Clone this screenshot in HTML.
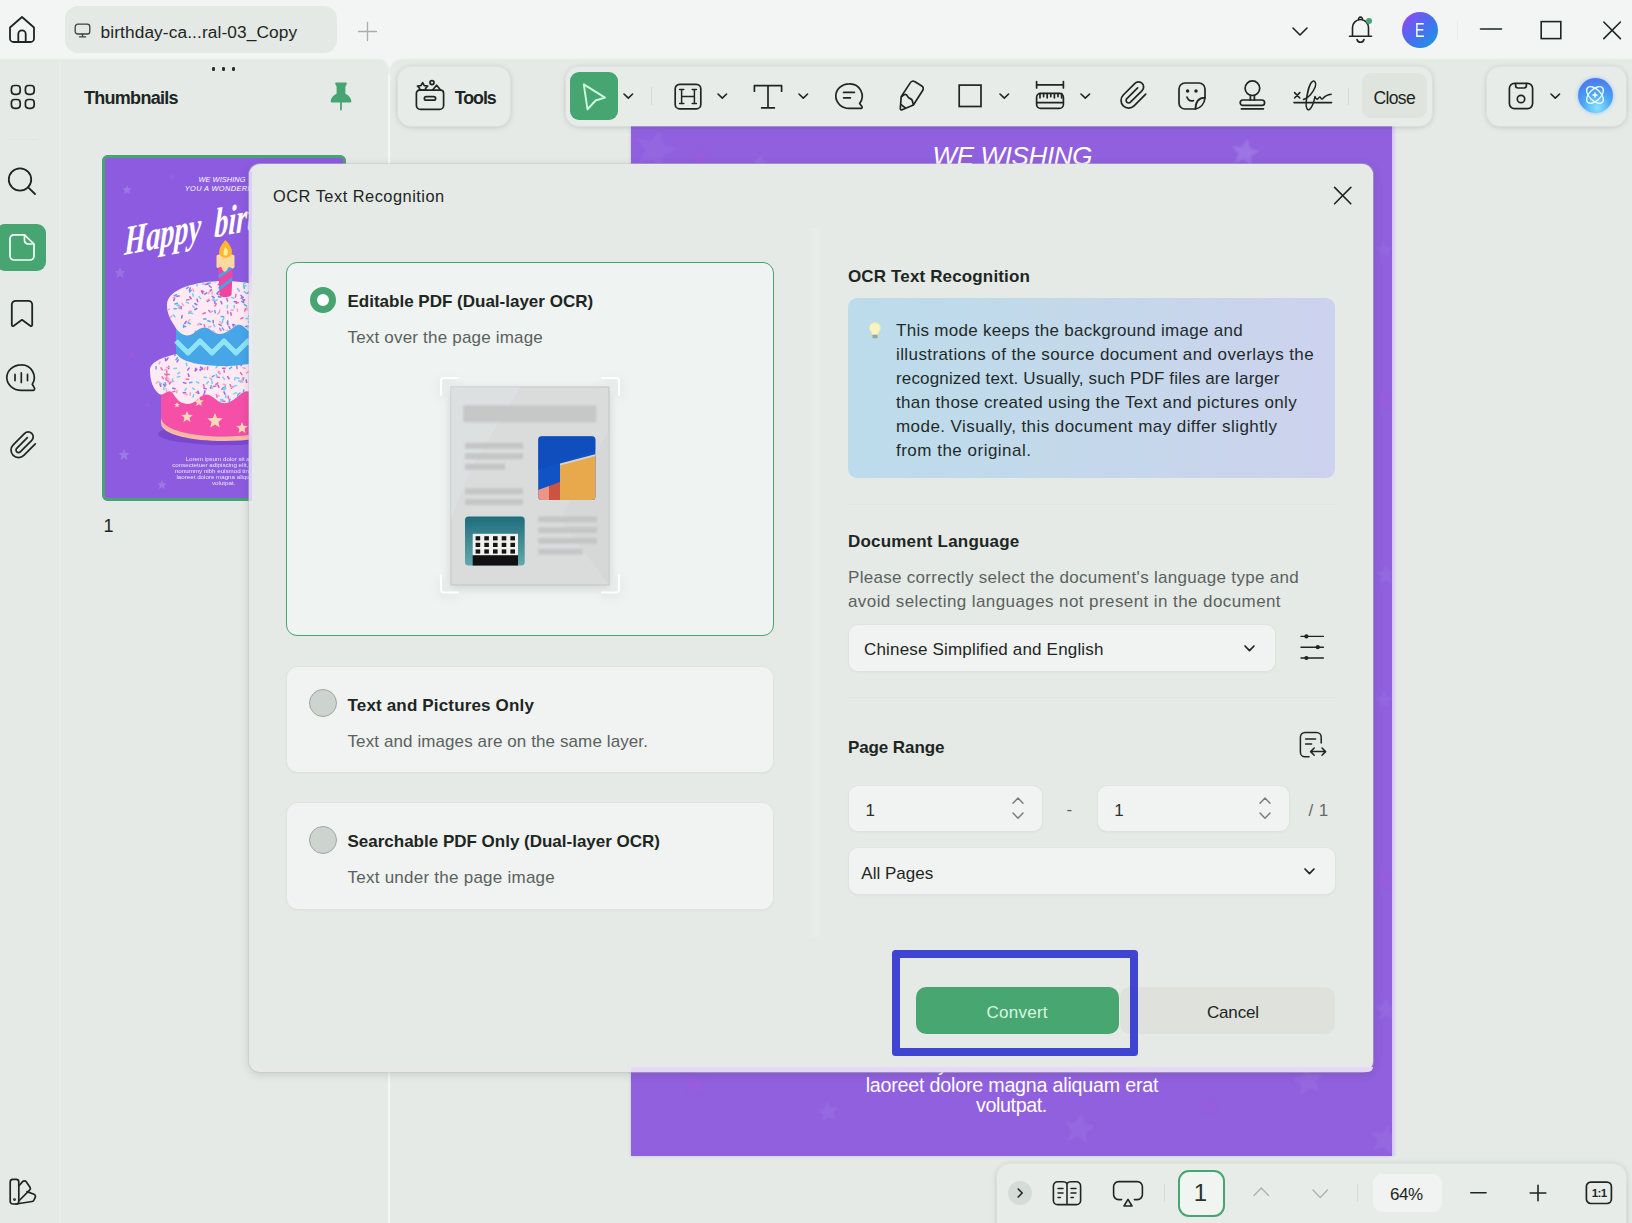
<!DOCTYPE html>
<html lang="en"><head><meta charset="utf-8"><title>OCR Text Recognition</title>
<style>
html,body{margin:0;padding:0;}
body{width:1632px;height:1223px;overflow:hidden;position:relative;background:#e5eae6;font-family:"Liberation Sans",sans-serif;}
.t{position:absolute;white-space:nowrap;line-height:1;}
svg{overflow:visible;}
</style></head><body>
<div style="position:absolute;left:0.0px;top:0.0px;width:1632.0px;height:1223.0px;background:#f2f5f3;"></div>
<div style="position:absolute;left:0.0px;top:59.5px;width:388.0px;height:1163.5px;background:#e5eae6;border-top-right-radius:10px;box-shadow:0 0 1.5px .3px #e5eae6;"></div>
<div style="position:absolute;left:390.5px;top:59.5px;width:1249.5px;height:1163.5px;background:#e5eae6;border-top-left-radius:11px;box-shadow:0 0 1.5px .3px #e5eae6;"></div>
<div style="position:absolute;left:388.2px;top:75.0px;width:2.1px;height:1148.0px;background:#f4f7f5;"></div>
<svg style="position:absolute;left:8.0px;top:15.0px;" width="28" height="29" viewBox="0 0 28 29" fill="none" stroke="#1d2622" stroke-width="1.8" stroke-linecap="round" stroke-linejoin="round"><path d="M2 12.5 L14 2 L26 12.5 V23.5 a3.5 3.5 0 0 1 -3.5 3.5 H5.5 a3.5 3.5 0 0 1 -3.5 -3.5 Z"/><path d="M10.3 27 V19 a3.7 3.7 0 0 1 7.4 0 V27"/></svg>
<div style="position:absolute;left:64.5px;top:6.0px;width:272.5px;height:47.0px;background:#e5e9e6;border-radius:13px;"></div>
<svg style="position:absolute;left:74.3px;top:22.8px;" width="17" height="15" viewBox="0 0 17 15" fill="none" stroke="#39423e" stroke-width="1.3" stroke-linecap="round" stroke-linejoin="round"><rect x="1.2" y="1.2" width="14.6" height="9.8" rx="2.6"/><path d="M8.5 11.2 V13.6 M5.4 13.8 H11.6"/></svg>
<span class="t" style="left:100.5px;top:24.0px;font-size:17.3px;color:#1d2622;letter-spacing:0.110px;">birthday-ca...ral-03_Copy</span>
<svg style="position:absolute;left:357.0px;top:21.0px;" width="21" height="21" viewBox="0 0 21 21" fill="none" stroke="#a9aeab" stroke-width="1.3" stroke-linecap="round" stroke-linejoin="round"><path d="M10.5 1.5 V19.5 M1.5 10.5 H19.5"/></svg>
<svg style="position:absolute;left:1290.0px;top:24.5px" width="20" height="13" viewBox="-10.0 -6.5 20 13" fill="none" stroke="#1d2622" stroke-width="1.6" stroke-linecap="round" stroke-linejoin="round"><path d="M-7.0 -3.5 L0 3.5 L7.0 -3.5"/></svg>
<svg style="position:absolute;left:1347.0px;top:14.0px;" width="27" height="31" viewBox="0 0 27 31" fill="none" stroke="#1d2622" stroke-width="1.6" stroke-linecap="round" stroke-linejoin="round"><path d="M11.7 5.6 a1.9 1.9 0 1 1 3.600 0"/><path d="M5.5 22 V13.5 a8 8 0 0 1 16 0 V22"/><path d="M2.5 22.3 H24.5"/><path d="M10 25.5 a3.6 3.6 0 0 0 7 0"/></svg>
<div style="position:absolute;left:1366.0px;top:18.0px;width:6.4px;height:6.4px;background:#46a570;border-radius:50%;"></div>
<div style="position:absolute;left:1402.0px;top:12.0px;width:36.0px;height:36.0px;border-radius:50%;background:linear-gradient(135deg,#8a4cf3 10%,#4a6cf0 50%,#1f93e3 90%);"></div>
<span class="t" style="left:1414.5px;top:20.0px;font-size:20px;color:#fff;transform:scaleX(0.72);transform-origin:0 50%;">E</span>
<div style="position:absolute;left:1456.5px;top:20.0px;width:1.0px;height:20.0px;background:#e9ece9;"></div>
<svg style="position:absolute;left:1478.0px;top:26.0px;" width="26" height="6" viewBox="0 0 26 6" fill="none" stroke="#1d2622" stroke-width="1.6" stroke-linecap="round" stroke-linejoin="round"><path d="M2.5 3 H23.5"/></svg>
<svg style="position:absolute;left:1539.0px;top:20.0px;stroke-linejoin:miter" width="24" height="20" viewBox="0 0 24 20" fill="none" stroke="#1d2622" stroke-width="1.6" stroke-linecap="round" stroke-linejoin="round"><rect x="2.2" y="1.6" width="19.6" height="17" /></svg>
<svg style="position:absolute;left:1601.0px;top:19.0px;" width="22" height="22" viewBox="0 0 22 22" fill="none" stroke="#1d2622" stroke-width="1.6" stroke-linecap="round" stroke-linejoin="round"><path d="M2.8 3 L19.4 19.6 M19.4 3 L2.8 19.6"/></svg>
<div style="position:absolute;left:59.0px;top:62.0px;width:2.0px;height:1161.0px;background:linear-gradient(90deg,rgba(255,255,255,0),rgba(255,255,255,.35),rgba(255,255,255,0));"></div>
<svg style="position:absolute;left:9.5px;top:83.5px;" width="25" height="25" viewBox="0 0 25 25" fill="none" stroke="#1d2622" stroke-width="1.7" stroke-linecap="round" stroke-linejoin="round"><rect x="1.4" y="1.5" width="8.8" height="8.8" rx="3.2"/><rect x="15.4" y="1.5" width="8.8" height="8.8" rx="3.2"/><rect x="1.4" y="15.5" width="8.8" height="8.8" rx="3.2"/><rect x="15.4" y="15.5" width="8.8" height="8.8" rx="3.2"/></svg>
<div style="position:absolute;left:8.0px;top:138.5px;width:30.0px;height:1.0px;background:#dfe4e0;"></div>
<svg style="position:absolute;left:6.0px;top:166.0px;" width="32" height="32" viewBox="0 0 32 32" fill="none" stroke="#1d2622" stroke-width="1.8" stroke-linecap="round" stroke-linejoin="round"><circle cx="14" cy="13.5" r="11.2"/><path d="M22.2 21.4 L29 28"/></svg>
<div style="position:absolute;left:-4.0px;top:224.0px;width:49.8px;height:46.6px;background:#46a570;border-radius:9px;"></div>
<svg style="position:absolute;left:8.0px;top:232.0px;" width="28" height="31" viewBox="0 0 28 31" fill="none" stroke="#f4fff8" stroke-width="1.7" stroke-linecap="round" stroke-linejoin="round"><path d="M6 2.8 H16.5 L26 12 V24 a4 4 0 0 1 -4 4 H6 a4 4 0 0 1 -4 -4 V6.8 a4 4 0 0 1 4 -4 Z"/><path d="M16.5 3 V8.5 a3.5 3.5 0 0 0 3.5 3.5 H25.8"/></svg>
<svg style="position:absolute;left:10.0px;top:299.0px;" width="24" height="30" viewBox="0 0 24 30" fill="none" stroke="#1d2622" stroke-width="1.8" stroke-linecap="round" stroke-linejoin="round"><path d="M5.8 1.8 H18.2 a4 4 0 0 1 4 4 V26 a1.1 1.1 0 0 1 -1.700 .9 L12 20.8 L3.500 26.900 a1.1 1.1 0 0 1 -1.700 -.9 V5.8 a4 4 0 0 1 4 -4 Z"/></svg>
<svg style="position:absolute;left:5.0px;top:363.0px;" width="33" height="31" viewBox="0 0 33 31" fill="none" stroke="#1d2622" stroke-width="1.7" stroke-linecap="round" stroke-linejoin="round"><path d="M16.2 1.9 a14.4 12.7 0 1 0 0 25.4 H28 a1.6 1.6 0 0 0 1.400 -2.400 L27.300 21.300 A12.700 12.700 0 0 0 16.200 1.900 Z"/><path d="M10 11.4 V17.6 M16.300 9.800 V19.400 M22.500 11.400 V17.600"/></svg>
<svg style="position:absolute;left:8.0px;top:430.0px;" width="30" height="30" viewBox="0 0 30 30" fill="none" stroke="#1d2622" stroke-width="1.7" stroke-linecap="round" stroke-linejoin="round"><g transform="translate(0.5,0.1) scale(1.25)"><path d="M21.44 11.05l-9.19 9.19a6 6 0 0 1-8.49-8.49l9.19-9.19a4 4 0 0 1 5.66 5.66l-9.2 9.19a2 2 0 0 1-2.83-2.83l8.49-8.48" stroke-width="1.36"/></g></svg>
<svg style="position:absolute;left:8.0px;top:1177.0px;" width="30" height="30" viewBox="0 0 30 30" fill="none" stroke="#1d2622" stroke-width="1.7" stroke-linecap="round" stroke-linejoin="round"><rect x="2.2" y="2.4" width="8.6" height="24.6" rx="2.6"/><path d="M10.8 9 L14.6 4.6 a2.4 2.4 0 0 1 3.6 0.2 L22 10.2 a2.4 2.4 0 0 1 -0.4 3 L10.8 24"/><path d="M19 14.6 L26 17.2 a2.4 2.4 0 0 1 1.2 3.2 L26 23 a2.4 2.4 0 0 1 -2 1.5 L8 27"/><circle cx="6.5" cy="22.6" r="0.6"/></svg>
<div style="position:absolute;left:212.2px;top:66.5px;width:2.6px;height:4.8px;background:#27302c;border-radius:1.3px;"></div>
<div style="position:absolute;left:222.2px;top:66.5px;width:2.6px;height:4.8px;background:#27302c;border-radius:1.3px;"></div>
<div style="position:absolute;left:232.2px;top:66.5px;width:2.6px;height:4.8px;background:#27302c;border-radius:1.3px;"></div>
<span class="t" style="left:84.0px;top:89.0px;font-size:18px;color:#1d2622;font-weight:700;letter-spacing:-0.721px;">Thumbnails</span>
<svg style="position:absolute;left:329.0px;top:80.0px;" width="24" height="32" viewBox="0 0 24 32" fill="none" stroke="#1d2622" stroke-width="1.2" stroke-linecap="round" stroke-linejoin="round"><path d="M7 3.2 H17 L16.4 5.4 L15.6 6 V14.2 C18.6 15.6 21.4 18 21.6 21.6 H2.4 C2.6 18 5.4 15.6 8.4 14.2 V6 L7.6 5.4 Z" fill="#46a570" stroke="#46a570" stroke-width="1.6"/><path d="M12 22 V29.6" stroke="#46a570" stroke-width="1.8"/></svg>
<span class="t" style="left:103.5px;top:517.0px;font-size:18px;color:#1d2622;">1</span>
<div style="position:absolute;left:630.5px;top:126.0px;width:761.5px;height:1030.0px;background:#9060de;overflow:hidden;box-shadow:0 0 3px rgba(90,70,140,.25);"><svg width="762" height="1030" style="position:absolute;left:0;top:0;filter:blur(1px)"><polygon points="616.6,12.2 618.9,22.3 628.9,24.9 620.0,30.2 620.6,40.5 612.8,33.6 603.2,37.4 607.3,27.9 600.8,20.0 611.0,20.9" fill="#9c74e3"/><polygon points="29.7,2.7 31.7,17.8 46.0,22.8 32.3,29.4 31.9,44.5 21.4,33.6 6.9,37.8 14.1,24.5 5.5,12.0 20.5,14.8" fill="#9466df"/><polygon points="69.0,20.0 72.2,27.6 80.4,28.3 74.1,33.7 76.1,41.7 69.0,37.4 61.9,41.7 63.9,33.7 57.6,28.3 65.8,27.6" fill="#975ddd"/><polygon points="129.8,28.0 131.7,33.9 137.8,35.0 132.7,38.6 133.6,44.7 128.6,41.0 123.1,43.8 125.1,37.9 120.7,33.5 126.9,33.5" fill="#966adf"/><polygon points="195.5,975.1 199.3,981.6 206.9,981.2 201.9,986.9 204.6,993.9 197.7,990.9 191.8,995.7 192.6,988.2 186.2,984.1 193.6,982.4" fill="#966adf"/><polygon points="450.4,986.2 453.3,997.5 464.7,1000.0 454.9,1006.4 456.0,1018.0 446.9,1010.6 436.2,1015.2 440.5,1004.3 432.7,995.5 444.4,996.2" fill="#9568df"/><polygon points="674.0,938.3 680.4,948.1 692.0,947.0 684.6,956.1 689.2,966.8 678.3,962.5 669.5,970.3 670.2,958.6 660.2,952.6 671.5,949.7" fill="#9568df"/><polygon points="63.0,946.0 66.4,954.3 75.4,955.0 68.6,960.8 70.6,969.5 63.0,964.9 55.4,969.5 57.4,960.8 50.6,955.0 59.6,954.3" fill="#975ddd"/><polygon points="579.0,969.0 581.9,976.0 589.5,976.6 583.7,981.5 585.5,988.9 579.0,985.0 572.5,988.9 574.3,981.5 568.5,976.6 576.1,976.0" fill="#975ddd"/><polygon points="757.3,998.3 759.4,1009.2 769.9,1012.3 760.2,1017.6 760.5,1028.6 752.5,1021.0 742.1,1024.7 746.8,1014.8 740.1,1006.0 751.1,1007.4" fill="#9568df"/><polygon points="752.0,262.0 755.2,269.6 763.4,270.3 757.1,275.7 759.1,283.7 752.0,279.4 744.9,283.7 746.9,275.7 740.6,270.3 748.8,269.6" fill="#975ddd"/><polygon points="755.0,438.0 757.9,445.0 765.5,445.6 759.7,450.5 761.5,457.9 755.0,453.9 748.5,457.9 750.3,450.5 744.5,445.6 752.1,445.0" fill="#9568df"/><polygon points="751.0,742.0 754.2,749.6 762.4,750.3 756.1,755.7 758.1,763.7 751.0,759.4 743.9,763.7 745.9,755.7 739.6,750.3 747.8,749.6" fill="#975ddd"/><polygon points="753.0,564.0 755.6,570.4 762.5,570.9 757.3,575.4 758.9,582.1 753.0,578.5 747.1,582.1 748.7,575.4 743.5,570.9 750.4,570.4" fill="#9466df"/><polygon points="753.0,114.0 755.6,120.4 762.5,120.9 757.3,125.4 758.9,132.1 753.0,128.5 747.1,132.1 748.7,125.4 743.5,120.9 750.4,120.4" fill="#9466df"/><polygon points="755.0,872.0 758.2,879.6 766.4,880.3 760.1,885.7 762.1,893.7 755.0,889.4 747.9,893.7 749.9,885.7 743.6,880.3 751.8,879.6" fill="#9568df"/></svg></div>
<div style="position:absolute;left:1392.0px;top:126.0px;width:5.0px;height:1030.0px;background:linear-gradient(90deg,#d6c6f4,rgba(224,214,244,0));"></div>
<span class="t" style="left:932.5px;top:143.0px;font-size:26px;color:#fff;font-style:italic;letter-spacing:-0.371px;">WE WISHING</span>
<span class="t" style="left:865.7px;top:1076.0px;font-size:19.7px;color:#fff;letter-spacing:-0.223px;">laoreet dolore magna aliquam erat</span>
<span class="t" style="left:976.0px;top:1096.0px;font-size:19.7px;color:#fff;letter-spacing:-0.386px;">volutpat.</span>
<div style="position:absolute;left:631px;top:1071.2px;width:761px;height:10px;overflow:hidden;">
<span class="t" style="left:233.0px;top:-16.0px;font-size:19.7px;color:#fff;letter-spacing:-0.421px;">nonummy nibh euismod tincidunt ut</span>
</div>
<div style="position:absolute;left:101.5px;top:155.3px;width:244.500px;height:345.300px;background:#8c5be0;border-radius:6px;overflow:hidden;box-shadow:0 0 0 0 #000;"><svg width="245" height="346" style="position:absolute;left:0;top:0"><polygon points="60.0,73.0 61.9,77.5 66.7,77.8 63.0,81.0 64.1,85.7 60.0,83.2 55.9,85.7 57.0,81.0 53.3,77.8 58.1,77.5" fill="#9d78e4"/><polygon points="25.0,30.0 26.3,33.2 29.8,33.5 27.1,35.7 27.9,39.0 25.0,37.2 22.1,39.0 22.9,35.7 20.2,33.5 23.7,33.2" fill="#9d78e4"/><polygon points="18.0,112.0 19.6,115.8 23.7,116.1 20.6,118.8 21.5,122.9 18.0,120.7 14.5,122.9 15.4,118.8 12.3,116.1 16.4,115.8" fill="#9872e2"/><polygon points="70.0,18.0 71.1,20.5 73.8,20.8 71.7,22.6 72.4,25.2 70.0,23.8 67.6,25.2 68.3,22.6 66.2,20.8 68.9,20.5" fill="#975ddd"/><polygon points="30.0,195.0 31.3,198.2 34.8,198.5 32.1,200.7 32.9,204.0 30.0,202.2 27.1,204.0 27.9,200.7 25.2,198.5 28.7,198.2" fill="#975ddd"/><polygon points="22.0,294.0 23.6,297.8 27.7,298.1 24.6,300.8 25.5,304.9 22.0,302.7 18.5,304.9 19.4,300.8 16.3,298.1 20.4,297.8" fill="#9d78e4"/><polygon points="45.0,246.0 46.1,248.5 48.8,248.8 46.7,250.6 47.4,253.2 45.0,251.8 42.6,253.2 43.3,250.6 41.2,248.8 43.9,248.5" fill="#975ddd"/><polygon points="60.0,325.0 61.3,328.2 64.8,328.5 62.1,330.7 62.9,334.0 60.0,332.2 57.1,334.0 57.9,330.7 55.2,328.5 58.7,328.2" fill="#9d78e4"/><ellipse cx="124" cy="279" rx="68" ry="11" fill="#7a48cf"/><path d="M59 236 V262 C59 288 185 288 185 262 V236 Z" fill="#f54fa8"/><path d="M59 262 C59 288 185 288 185 262 V268 C185 292 59 292 59 268 Z" fill="#ffb6a3"/><polygon points="85.0,256.0 86.6,259.8 90.7,260.1 87.6,262.8 88.5,266.9 85.0,264.7 81.5,266.9 82.4,262.8 79.3,260.1 83.4,259.8" fill="#ffd9b8"/><polygon points="113.0,258.0 115.1,263.1 120.6,263.5 116.4,267.1 117.7,272.5 113.0,269.6 108.3,272.5 109.6,267.1 105.4,263.5 110.9,263.1" fill="#ffd9b8"/><polygon points="140.0,267.0 141.6,270.8 145.7,271.1 142.6,273.8 143.5,277.9 140.0,275.7 136.5,277.9 137.4,273.8 134.3,271.1 138.4,270.8" fill="#ffd9b8"/><polygon points="97.0,242.0 98.3,245.2 101.8,245.5 99.1,247.7 99.9,251.0 97.0,249.2 94.1,251.0 94.9,247.7 92.2,245.5 95.7,245.2" fill="#ffd9b8"/><polygon points="75.0,247.0 75.8,248.9 77.9,249.1 76.3,250.4 76.8,252.4 75.0,251.3 73.2,252.4 73.7,250.4 72.1,249.1 74.2,248.9" fill="#ffd9b8"/><path d="M48 215 C48 188 196 188 196 215 C197 232 190 246 182 240 C176 236 172 252 162 248 C152 244 150 232 140 238 C132 244 126 252 116 246 C108 240 104 236 96 244 C88 252 78 250 72 240 C66 230 62 244 56 238 C50 232 48 224 48 215 Z" fill="#fdeaf3"/><clipPath id="f2"><path d="M48 215 C48 188 196 188 196 215 C197 232 190 246 182 240 C176 236 172 252 162 248 C152 244 150 232 140 238 C132 244 126 252 116 246 C108 240 104 236 96 244 C88 252 78 250 72 240 C66 230 62 244 56 238 C50 232 48 224 48 215 Z"/></clipPath><g clip-path="url(#f2)"><path d="M115.9 227.9l-2.0 1.4M89.6 200.2l-2.1 1.2M150.4 224.0l1.7 1.7M64.8 215.9l0.0 2.4M86.6 224.2l-2.4 0.0M174.0 223.8l2.3 0.8M148.7 204.5l-2.4 0.3M169.1 196.5l-0.7 2.3M64.7 222.0l-0.9 2.2M108.0 247.5l1.9 1.4M163.0 227.3l1.7 1.7M99.4 191.9l2.4 0.2M60.2 221.8l1.3 2.0M176.3 202.5l0.6 2.3M115.0 222.0l2.3 0.5M128.0 229.6l1.1 2.1M134.9 193.6l-2.4 0.1M72.9 236.2l-2.3 0.7M64.4 224.8l1.9 1.4M59.0 212.8l1.3 2.0M170.8 212.8l-2.4 0.4M114.4 239.8l0.7 2.3M64.8 219.4l2.4 0.2M140.4 241.9l-1.9 1.4M162.3 207.6l2.0 1.3M142.0 246.3l-2.4 0.1M99.5 213.7l-1.3 2.0M101.4 229.8l0.9 2.2M104.2 195.0l-2.4 0.2M134.7 211.0l0.4 2.4M120.5 245.9l2.4 0.3M62.8 219.0l2.0 1.4M116.3 217.0l1.6 1.7M105.7 212.1l-0.3 2.4M94.2 237.4l2.2 1.0M142.6 200.6l-2.0 1.3M152.1 225.3l-1.2 2.1M171.9 227.9l-1.9 1.5M98.4 200.2l-0.3 2.4M177.7 212.5l-0.2 2.4M138.5 217.6l1.4 2.0M113.8 230.9l-2.3 0.6M122.1 214.9l0.1 2.4M186.4 215.2l-1.8 1.6M151.7 194.5l-2.0 1.3M157.2 226.4l0.2 2.4M95.0 196.1l-1.9 1.5M126.1 241.3l0.3 2.4M182.2 211.4l-0.4 2.4" stroke="#f067b4" stroke-width="1.5" stroke-linecap="round" fill="none"/><path d="M129.6 202.0l-0.7 2.3M165.9 217.4l2.3 0.5M169.1 221.5l-2.3 0.6M145.4 239.0l0.4 2.4M141.7 222.8l-0.6 2.3M166.0 220.7l-0.9 2.2M148.4 242.5l2.3 0.5M141.8 235.1l-0.5 2.3M89.3 198.0l-0.6 2.3M170.2 229.2l-1.6 1.8M176.8 223.1l0.1 2.4M138.0 238.0l-2.0 1.4M104.3 190.7l1.5 1.8M112.2 220.7l-2.1 1.2M54.1 211.6l-0.0 2.4M89.9 227.2l-2.3 0.6M129.6 212.2l-1.9 1.4M164.5 239.2l2.4 0.2M158.0 234.1l1.7 1.7M154.5 209.3l1.3 2.0M137.4 249.0l-2.3 0.8M175.6 234.5l0.6 2.3M135.5 205.3l-2.3 0.7M167.7 228.8l0.0 2.4M148.0 213.7l0.2 2.4M184.7 223.3l-0.6 2.3M178.4 209.0l0.2 2.4M170.8 237.7l1.0 2.2M75.4 202.8l-1.4 1.9M79.1 200.0l2.0 1.3M123.4 190.8l2.1 1.2M92.0 205.4l0.2 2.4M138.5 200.4l-2.0 1.3M63.1 227.8l0.8 2.3M107.1 244.7l-2.0 1.2M133.6 206.7l2.4 0.4M136.8 200.4l0.6 2.3M123.3 231.0l-1.0 2.2M127.9 244.2l-0.7 2.3M165.1 241.9l-2.0 1.4M172.4 226.8l2.0 1.3M135.8 240.2l-0.2 2.4" stroke="#5aa9ee" stroke-width="1.5" stroke-linecap="round" fill="none"/><path d="M110.5 203.0l1.8 1.6M127.5 204.3l2.3 0.6M155.8 232.3l1.9 1.5M178.9 236.8l1.9 1.5M156.9 215.6l-1.4 1.9M144.2 224.9l0.4 2.4M63.4 203.4l0.2 2.4M77.2 196.6l-2.2 0.9M86.3 219.0l0.7 2.3M154.9 206.1l-0.6 2.3M180.8 225.3l-0.5 2.3M68.6 226.8l-1.1 2.1M114.4 206.7l1.6 1.8M66.7 211.3l-0.0 2.4M138.8 247.6l-2.4 0.2M109.5 230.9l-0.9 2.2M125.6 221.8l1.5 1.9M100.4 213.9l-2.3 0.6M141.2 243.3l-2.3 0.7M138.9 208.2l0.3 2.4M93.8 213.3l-0.6 2.3M131.3 231.7l-1.9 1.4M159.0 224.7l-2.4 0.3M157.7 220.1l1.6 1.8M101.9 239.0l0.1 2.4M87.2 213.1l-1.5 1.9M70.8 233.3l2.4 0.4M123.0 213.2l-2.4 0.1M76.3 204.8l-1.3 2.0M132.4 198.5l-2.4 0.0M117.4 205.0l2.2 0.8M133.7 195.7l1.0 2.2M83.6 237.7l-2.4 0.1M81.5 227.6l2.3 0.7M105.8 199.3l-1.8 1.6M115.9 230.0l1.0 2.2M66.0 203.0l-1.3 2.0M61.6 229.2l1.4 2.0M122.0 236.9l1.0 2.2M94.9 214.3l-1.7 1.7M101.8 233.1l2.3 0.8M95.8 236.2l1.1 2.1M103.8 191.1l0.7 2.3M102.8 235.7l-0.2 2.4M58.0 229.0l0.7 2.3M73.3 198.0l-0.4 2.4M98.5 212.1l2.1 1.1M156.1 239.2l-2.4 0.5M121.5 232.5l-1.6 1.8" stroke="#9b6be0" stroke-width="1.5" stroke-linecap="round" fill="none"/><path d="M71.7 226.3l-2.3 0.6M65.2 222.9l2.0 1.3M136.6 247.9l2.4 0.4M121.3 229.3l2.4 0.4M184.6 216.4l0.6 2.3M179.2 220.8l-2.1 1.2M170.7 213.5l-0.6 2.3M139.9 191.3l1.1 2.1M158.1 201.7l-0.9 2.2M75.1 235.4l-0.6 2.3M146.3 216.6l-1.8 1.5M131.9 231.5l-2.3 0.7M160.7 233.1l-2.3 0.6M90.5 200.7l-1.0 2.2M178.6 212.9l1.9 1.4M64.0 234.0l0.8 2.3M68.6 226.5l-2.3 0.7M64.8 214.6l-2.3 0.6M153.5 236.4l-1.5 1.8M56.2 226.6l-1.9 1.4M114.9 240.0l2.2 0.9M100.5 193.1l2.4 0.2M140.9 212.7l2.3 0.7M188.7 219.1l-2.0 1.4M131.6 203.2l2.3 0.6M101.4 194.5l-1.8 1.6M138.9 225.7l1.8 1.6M107.8 223.2l2.0 1.4M67.1 212.3l-2.4 0.3M155.0 201.5l-0.7 2.3M183.1 231.6l0.5 2.3M103.0 212.7l-0.9 2.2M156.6 233.0l-1.2 2.1M140.5 222.9l-0.5 2.4M58.0 206.8l-1.1 2.1M170.3 231.6l2.2 1.0M162.2 198.0l-2.1 1.2M126.1 210.5l-2.2 1.0M189.7 228.3l-1.9 1.4M101.5 207.7l2.4 0.1M161.1 207.9l1.7 1.7M88.4 237.7l-0.2 2.4M147.7 206.3l-1.9 1.5M143.8 242.4l-1.9 1.5M188.1 209.3l1.3 2.0M82.9 238.8l2.3 0.8M117.0 216.1l0.9 2.2" stroke="#f8a2c8" stroke-width="1.5" stroke-linecap="round" fill="none"/><path d="M57.5 227.6l2.0 1.3M84.4 208.2l0.4 2.4M134.1 237.7l-2.2 1.1M134.7 230.4l-2.3 0.7M122.9 232.2l-1.6 1.8M146.2 247.2l-2.2 0.9M134.7 222.7l2.3 0.8M61.8 232.4l0.1 2.4M70.6 223.9l-0.1 2.4M121.0 222.2l1.4 1.9M84.2 233.5l-1.2 2.1M102.0 222.3l2.4 0.2M120.6 244.5l-1.7 1.7M109.8 225.9l0.4 2.4M124.6 199.0l-0.4 2.4M89.6 202.8l-2.1 1.1M120.8 244.4l-2.4 0.3M140.4 246.6l-2.4 0.2M77.6 217.4l-1.9 1.4M136.8 225.8l2.1 1.2M179.7 202.8l-2.3 0.6M123.8 240.0l0.0 2.4M147.8 197.8l-0.3 2.4M89.3 202.8l-2.1 1.1M161.2 233.3l-1.7 1.7M133.1 222.4l-0.4 2.4M125.7 201.7l0.3 2.4M94.6 226.8l2.1 1.2M141.2 202.1l-2.3 0.8M114.2 219.5l1.1 2.2M91.6 239.6l-0.5 2.3M74.4 213.3l-2.4 0.3M166.1 212.2l-0.2 2.4M106.3 226.7l-1.5 1.9M135.5 248.1l-1.6 1.8M98.6 198.7l-1.9 1.4M90.5 233.2l2.1 1.1M123.9 233.3l-1.8 1.6M109.2 231.2l1.0 2.2M77.7 221.7l-2.4 0.3M74.4 196.4l1.6 1.8M115.7 211.0l-1.7 1.7M163.7 197.4l-1.5 1.9" stroke="#6fd0f0" stroke-width="1.5" stroke-linecap="round" fill="none"/></g><path d="M74 170 V196 C74 216 170 216 170 196 V170 Z" fill="#46a6e8"/><path d="M74 186 L86 198 L98 186 L110 198 L122 186 L134 198 L146 186 L158 198 L170 186" fill="none" stroke="#8ee3f5" stroke-width="5" stroke-linejoin="round"/><path d="M65 150 C65 118 179 118 179 150 C180 164 176 176 168 172 C162 168 160 182 150 178 C142 174 140 166 132 172 C124 178 118 182 110 176 C104 170 98 172 92 178 C84 184 76 178 72 170 C68 164 65 158 65 150 Z" fill="#fdeaf3"/><clipPath id="f1"><path d="M65 150 C65 118 179 118 179 150 C180 164 176 176 168 172 C162 168 160 182 150 178 C142 174 140 166 132 172 C124 178 118 182 110 176 C104 170 98 172 92 178 C84 184 76 178 72 170 C68 164 65 158 65 150 Z"/></clipPath><g clip-path="url(#f1)"><path d="M125.6 156.2l0.3 2.4M114.2 148.9l-1.2 2.1M133.9 139.5l-0.4 2.4M117.8 173.5l1.2 2.1M102.2 169.8l0.6 2.3M99.4 135.8l2.2 0.9M141.3 142.2l-2.2 1.0M134.2 174.1l2.0 1.4M103.2 157.8l-2.2 1.0M136.3 147.6l-2.3 0.7M112.1 124.5l2.4 0.2M121.8 130.3l-2.4 0.1M87.1 144.6l-2.4 0.5M93.6 176.3l-0.8 2.3M141.0 162.6l-2.1 1.2M153.1 153.1l0.9 2.2M143.4 153.8l-0.7 2.3M167.3 156.1l1.9 1.5M164.9 138.8l-2.2 0.9M111.2 178.2l0.4 2.4" stroke="#f067b4" stroke-width="1.5" stroke-linecap="round" fill="none"/><path d="M161.0 164.9l-1.5 1.9M139.8 146.3l1.9 1.4M105.8 165.7l2.3 0.8M120.3 173.0l1.4 1.9M97.1 168.5l2.2 1.0M162.8 149.3l-1.5 1.9M150.7 137.6l-1.6 1.8M88.8 156.6l-1.9 1.5M89.3 135.3l-1.8 1.6M147.7 163.9l1.2 2.1M147.3 136.8l-2.0 1.4M114.9 138.5l2.0 1.3M139.9 143.4l1.8 1.6M148.4 159.5l-1.7 1.7M141.4 175.1l2.4 0.2M81.6 170.0l0.0 2.4M157.4 138.4l-0.3 2.4M108.3 128.0l-2.4 0.3M74.4 153.7l-2.4 0.1M125.7 165.8l-0.4 2.4M74.4 139.8l-2.2 0.9M112.7 155.4l0.6 2.3M137.8 171.7l2.1 1.2M101.7 163.9l2.4 0.1M120.1 129.4l-0.5 2.3M131.2 169.4l0.2 2.4M136.1 176.0l1.1 2.1M75.3 148.3l-2.3 0.7M153.9 136.9l1.6 1.8M81.4 171.2l2.4 0.3M142.5 149.6l2.0 1.4M119.2 161.6l2.4 0.1M107.6 128.5l-2.4 0.3M76.5 151.2l1.0 2.2M141.7 130.9l0.6 2.3M86.4 132.2l-1.9 1.4M134.7 173.6l1.5 1.9M160.6 147.6l-1.4 2.0M86.0 167.7l2.2 1.0M129.5 176.0l0.7 2.3" stroke="#5aa9ee" stroke-width="1.5" stroke-linecap="round" fill="none"/><path d="M111.1 165.4l0.2 2.4M88.2 133.0l-0.8 2.3M92.9 148.5l2.0 1.3M147.1 166.5l0.6 2.3M142.6 144.9l-1.7 1.7M107.3 145.1l-2.0 1.3M109.5 134.6l-1.7 1.7M157.6 139.1l0.7 2.3M118.0 128.1l-1.7 1.7M107.3 130.7l1.8 1.6M93.1 127.3l-2.2 0.9M87.8 141.8l1.4 1.9M125.6 167.3l0.3 2.4M104.8 137.9l-2.0 1.3M153.3 135.9l1.8 1.6M168.6 162.0l-2.3 0.7M80.1 160.5l-0.4 2.4M72.6 143.3l-0.8 2.3M112.4 146.0l0.6 2.3M124.8 143.6l0.7 2.3M106.8 155.5l1.8 1.6M146.1 171.4l-2.4 0.0M130.6 169.5l2.3 0.5M117.0 169.3l2.1 1.1M110.2 141.3l1.9 1.4M139.0 140.4l1.5 1.9M77.1 141.0l-2.4 0.2M106.1 129.1l-2.4 0.3M150.7 165.2l0.1 2.4M94.9 153.5l-2.1 1.1M119.0 146.5l0.8 2.3M79.0 151.4l0.2 2.4M132.2 146.6l2.4 0.3M99.7 136.4l1.1 2.1M167.8 164.5l-2.2 0.9M155.7 131.0l2.4 0.4M84.2 166.5l-1.4 2.0M116.8 136.4l-1.5 1.9M116.4 141.8l2.4 0.3M128.7 157.7l0.5 2.4M95.0 144.3l0.7 2.3M127.0 171.5l1.0 2.2" stroke="#9b6be0" stroke-width="1.5" stroke-linecap="round" fill="none"/><path d="M131.3 155.1l-2.4 0.1M110.6 156.2l-2.3 0.6M136.4 134.2l1.2 2.1M95.7 176.3l1.0 2.2M106.6 174.1l-1.6 1.8M132.9 171.0l2.2 1.0M112.8 124.7l0.7 2.3M67.4 154.1l-2.1 1.2M117.2 157.4l-1.6 1.8M159.9 132.3l1.7 1.7M125.7 179.9l-2.4 0.2M144.7 152.7l0.4 2.4M109.1 171.5l-2.3 0.5M138.7 176.8l1.1 2.2M153.2 133.0l2.2 1.0M112.5 145.0l-2.4 0.1M132.5 125.2l1.8 1.6M161.0 153.2l0.5 2.3M76.9 151.1l-0.1 2.4M124.0 179.7l2.2 1.0M88.9 155.8l-2.1 1.1M87.9 164.7l-1.7 1.6M69.9 160.7l-1.3 2.0M107.4 136.5l-0.8 2.3M80.1 148.6l1.3 2.0M107.0 144.2l-2.1 1.1M125.2 175.4l2.3 0.7M111.0 175.8l1.8 1.5M166.3 135.7l1.6 1.8M90.9 133.9l0.7 2.3M135.3 153.9l0.3 2.4M110.1 136.5l0.0 2.4M143.1 125.3l1.3 2.0M117.9 166.7l1.7 1.7M97.5 168.6l-1.9 1.4M117.8 155.1l-0.3 2.4M73.4 141.7l-2.2 0.9" stroke="#f8a2c8" stroke-width="1.5" stroke-linecap="round" fill="none"/><path d="M88.1 157.7l2.3 0.8M172.0 147.9l-1.2 2.1M110.9 143.0l0.9 2.2M156.2 138.3l-0.5 2.4M90.6 138.8l0.7 2.3M129.6 142.4l2.2 0.8M161.5 167.0l2.2 0.9M135.6 133.6l1.0 2.2M167.1 153.4l-1.4 2.0M90.8 150.9l1.6 1.8M97.0 141.8l1.7 1.7M132.1 150.4l0.3 2.4M95.1 128.5l-0.1 2.4M144.0 130.8l-2.4 0.1M143.7 174.9l2.1 1.2M164.9 156.2l-1.5 1.9M71.6 160.0l1.3 2.0M143.3 127.9l-1.9 1.5M122.0 163.0l-1.4 2.0M103.0 128.9l-2.4 0.2M142.3 136.5l1.7 1.7M84.3 147.1l2.2 1.0M115.3 144.9l-2.1 1.1M120.7 164.9l-0.2 2.4M125.5 150.6l-0.4 2.4M145.7 170.7l0.1 2.4M111.7 169.5l1.0 2.2M74.8 149.9l2.4 0.3M142.0 176.7l1.9 1.4M157.4 148.8l-1.4 2.0M144.0 163.6l2.4 0.1" stroke="#6fd0f0" stroke-width="1.5" stroke-linecap="round" fill="none"/></g><path d="M116 108 H131 L129.500 140 C126 143 120 143 117.500 140 Z" fill="#f0459c"/><path d="M116.500 122 L130.500 112 M117 134 L130 124" stroke="#4aa0ea" stroke-width="3.2"/><path d="M114.500 101 C114.500 98 132.500 98 132.500 101 V112 C130 116 128 110 126 113 C124 118 121 118 120 113 C118 110 116 115 114.500 112 Z" fill="#ffd9a0"/><path d="M123.500 85 C129 91 131 95 129.500 99 C127 104 120 104 117.500 99 C116 95 119 90 123.500 85 Z" fill="#ffb52e"/><path d="M123.500 92 C126 95 126.500 97 125.500 99 C124.500 101 122 101 121.500 99 C121 97 122 95 123.500 92 Z" fill="#fff0a0"/></svg>
<span class="t" style="left:97.0px;top:21.0px;font-size:7.4px;color:#fff;font-style:italic;letter-spacing:0.055px;">WE WISHING</span>
<span class="t" style="left:83.2px;top:30.0px;font-size:7.4px;color:#fff;font-style:italic;letter-spacing:0.385px;">YOU A WONDERFUL</span>
<span class="t" style="left:22.0px;top:65.5px;font-size:41px;font-weight:700;font-style:italic;color:#fff;transform:rotate(-11deg) skewX(-13deg) scaleX(.70);transform-origin:0 34.3px;word-spacing:9px;font-family:'Liberation Serif','DejaVu Serif',serif;">Happy birthday</span>
<span class="t" style="left:84.0px;top:301.0px;font-size:6.2px;color:#fff;opacity:.85;">Lorem ipsum dolor sit amet,</span>
<span class="t" style="left:70.7px;top:307.0px;font-size:6.2px;color:#fff;opacity:.85;">consectetuer adipiscing elit, sed diam</span>
<span class="t" style="left:73.4px;top:313.0px;font-size:6.2px;color:#fff;opacity:.85;">nonummy nibh euismod tincidunt ut</span>
<span class="t" style="left:75.0px;top:319.0px;font-size:6.2px;color:#fff;opacity:.85;">laoreet dolore magna aliquam erat</span>
<span class="t" style="left:110.5px;top:325.0px;font-size:6.2px;color:#fff;opacity:.85;">volutpat.</span>
<div style="position:absolute;left:0;top:0;right:0;bottom:0;border:3px solid #46a570;border-radius:6px;"></div></div>
<div style="position:absolute;left:398.0px;top:66.5px;width:112.0px;height:59.0px;background:#e8ece9;border-radius:13px;box-shadow:0 0 0 1px rgba(255,255,255,.3),0 1px 6px rgba(60,80,70,.20),0 0 3px rgba(60,80,70,.14);"></div>
<svg style="position:absolute;left:414.0px;top:78.0px;" width="32" height="33" viewBox="0 0 32 33" fill="none" stroke="#1d2622" stroke-width="1.7" stroke-linecap="round" stroke-linejoin="round"><path d="M2.4 15.2 a3 3 0 0 1 3 -3 H26.6 a3 3 0 0 1 3 3 V27.4 a4 4 0 0 1 -4 4 H6.4 a4 4 0 0 1 -4 -4 Z"/><rect x="10.4" y="18.6" width="11.2" height="3.6" rx="1.8"/><path d="M8.6 4.600 L10.300 7.600 L13.800 8 L11.500 10.400 L12 12.200 H5.200 L5.700 10.400 L3.400 8 L6.900 7.600 Z"/><circle cx="18" cy="4.600" r="2"/><path d="M18.400 12.200 L22.600 7.200 L26.800 12.200"/></svg>
<span class="t" style="left:454.7px;top:90.0px;font-size:17.8px;color:#1d2622;font-weight:700;letter-spacing:-1.009px;">Tools</span>
<div style="position:absolute;left:565.5px;top:66.5px;width:866.5px;height:59.0px;background:#e8ece9;border-radius:13px;box-shadow:0 0 0 1px rgba(255,255,255,.3),0 1px 6px rgba(60,80,70,.20),0 0 3px rgba(60,80,70,.14);"></div>
<div style="position:absolute;left:570.0px;top:72.0px;width:47.6px;height:47.7px;background:#46a570;border-radius:9px;"></div>
<svg style="position:absolute;left:580.0px;top:81.0px;" width="30" height="32" viewBox="0 0 30 32" fill="none" stroke="#cfffe2" stroke-width="1.9" stroke-linecap="round" stroke-linejoin="round"><path d="M3.8 3.4 L25 16.6 L15.6 19.5 L7.5 28.4 Z"/></svg>
<svg style="position:absolute;left:621.3px;top:90.6px" width="14.6" height="10.2" viewBox="-7.3 -5.1 14.6 10.2" fill="none" stroke="#1d2622" stroke-width="1.6" stroke-linecap="round" stroke-linejoin="round"><path d="M-4.3 -2.1 L0 2.1 L4.3 -2.1"/></svg>
<div style="position:absolute;left:650.5px;top:87.0px;width:1.0px;height:17.5px;background:#d6dad7;"></div>
<svg style="position:absolute;left:673.0px;top:81.5px;" width="30" height="29" viewBox="0 0 30 29" fill="none" stroke="#1d2622" stroke-width="1.7" stroke-linecap="round" stroke-linejoin="round"><rect x="2.2" y="2.3" width="25.6" height="24.5" rx="4.4"/><path d="M8.6 7.6 V21.4 M21.4 7.6 V21.4 M8.6 14.4 H21.4 M6.6 7.4 H10.8 M19.2 7.4 H23.4 M6.6 21.6 H10.8 M19.2 21.6 H23.4" stroke-width="1.5"/></svg>
<svg style="position:absolute;left:715.3px;top:90.6px" width="14.6" height="10.2" viewBox="-7.3 -5.1 14.6 10.2" fill="none" stroke="#1d2622" stroke-width="1.6" stroke-linecap="round" stroke-linejoin="round"><path d="M-4.3 -2.1 L0 2.1 L4.3 -2.1"/></svg>
<svg style="position:absolute;left:752.0px;top:82.5px;" width="32" height="27" viewBox="0 0 32 27" fill="none" stroke="#1d2622" stroke-width="1.7" stroke-linecap="round" stroke-linejoin="round"><path d="M2.4 8.2 V2.6 H29.6 V8.2 M16 2.6 V24.6 M9.6 24.8 H22.4"/></svg>
<svg style="position:absolute;left:796.2px;top:90.6px" width="14.6" height="10.2" viewBox="-7.3 -5.1 14.6 10.2" fill="none" stroke="#1d2622" stroke-width="1.6" stroke-linecap="round" stroke-linejoin="round"><path d="M-4.3 -2.1 L0 2.1 L4.3 -2.1"/></svg>
<svg style="position:absolute;left:833.0px;top:81.0px;" width="33" height="31" viewBox="0 0 33 31" fill="none" stroke="#1d2622" stroke-width="1.7" stroke-linecap="round" stroke-linejoin="round"><path d="M16.2 2.8 a13.4 12.3 0 1 0 0 24.6 H28 a1.1 1.1 0 0 0 0.9 -1.8 L26.6 22.6 A12.3 12.3 0 0 0 16.2 2.8 Z"/><path d="M10.6 11.4 H21.4 M10.6 16.8 H17.4"/></svg>
<svg style="position:absolute;left:896.0px;top:79.0px;" width="30" height="33" viewBox="0 0 30 33" fill="none" stroke="#1d2622" stroke-width="1.7" stroke-linecap="round" stroke-linejoin="round"><path d="M18.6 2.6 L25.8 7 a3 3 0 0 1 1 4.2 L17.4 26 L6.2 30.8 a1.4 1.4 0 0 1 -1.9 -1.2 L5.2 17.6 L14.4 3.6 a3 3 0 0 1 4.2 -1 Z"/><path d="M6 17.4 C8.4 14.6 10.6 15 11.6 17.4 C12.6 19.8 15.2 19.4 16 21 C16.8 22.6 17 24.4 17.2 25.6"/><path d="M4.8 25.4 L9.4 29"/></svg>
<svg style="position:absolute;left:956.0px;top:82.0px;stroke-linejoin:miter" width="28" height="28" viewBox="0 0 28 28" fill="none" stroke="#1d2622" stroke-width="1.7" stroke-linecap="round" stroke-linejoin="round"><rect x="3.2" y="3.1" width="21.8" height="21.4" /></svg>
<svg style="position:absolute;left:997.0px;top:90.6px" width="14.6" height="10.2" viewBox="-7.3 -5.1 14.6 10.2" fill="none" stroke="#1d2622" stroke-width="1.6" stroke-linecap="round" stroke-linejoin="round"><path d="M-4.3 -2.1 L0 2.1 L4.3 -2.1"/></svg>
<svg style="position:absolute;left:1034.0px;top:79.0px;" width="32" height="32" viewBox="0 0 32 32" fill="none" stroke="#1d2622" stroke-width="1.7" stroke-linecap="round" stroke-linejoin="round"><path d="M2.6 2.6 V9 M29.4 2.6 V9 M2.6 5.8 H29.4"/><rect x="2.6" y="14.4" width="26.8" height="15" rx="4"/><path d="M2.8 23.6 H29.2"/><path d="M6 14.6 V18.8"/><path d="M9.6 14.6 V17.6"/><path d="M13.2 14.6 V18.8"/><path d="M16.8 14.6 V17.6"/><path d="M20.4 14.6 V18.8"/><path d="M24 14.6 V17.6"/><path d="M27.6 14.6 V18.8"/></svg>
<svg style="position:absolute;left:1078.2px;top:90.6px" width="14.6" height="10.2" viewBox="-7.3 -5.1 14.6 10.2" fill="none" stroke="#1d2622" stroke-width="1.6" stroke-linecap="round" stroke-linejoin="round"><path d="M-4.3 -2.1 L0 2.1 L4.3 -2.1"/></svg>
<svg style="position:absolute;left:1118.0px;top:79.0px;" width="30" height="33" viewBox="0 0 30 33" fill="none" stroke="#1d2622" stroke-width="1.7" stroke-linecap="round" stroke-linejoin="round"><g transform="translate(0.5,1.1) scale(1.27)"><path d="M21.44 11.05l-9.19 9.19a6 6 0 0 1-8.49-8.49l9.19-9.19a4 4 0 0 1 5.66 5.66l-9.2 9.19a2 2 0 0 1-2.83-2.83l8.49-8.48" stroke-width="1.34"/></g></svg>
<svg style="position:absolute;left:1177.0px;top:81.0px;" width="30" height="30" viewBox="0 0 30 30" fill="none" stroke="#1d2622" stroke-width="1.7" stroke-linecap="round" stroke-linejoin="round"><path d="M8 2 H22 a6 6 0 0 1 6 6 V16.6 C22.4 16.6 18.6 19 18.4 28 H8 a6 6 0 0 1 -6 -6 V8 a6 6 0 0 1 6 -6 Z"/><path d="M28 16.8 C27.4 22.6 23.6 27 18.6 28"/><circle cx="10.6" cy="10" r="0.9" fill="#1d2622"/><circle cx="19" cy="10" r="0.9" fill="#1d2622"/><path d="M10 16 C11 19 13.6 20.4 16.4 19.6"/></svg>
<svg style="position:absolute;left:1238.0px;top:79.0px;" width="29" height="32" viewBox="0 0 29 32" fill="none" stroke="#1d2622" stroke-width="1.7" stroke-linecap="round" stroke-linejoin="round"><circle cx="14.4" cy="9.2" r="7.3"/><path d="M12.4 16.4 V21 M16.4 16.4 V21"/><rect x="2.2" y="21" width="24.4" height="5.4" rx="2.7"/><path d="M3.4 29.8 H25.4"/></svg>
<svg style="position:absolute;left:1291.0px;top:78.0px;" width="44" height="35" viewBox="0 0 44 35" fill="none" stroke="#1d2622" stroke-width="1.6" stroke-linecap="round" stroke-linejoin="round"><path d="M3.6 14.6 L8.8 20 M8.8 14.6 L3.6 20"/><path d="M3 24.6 H40.6"/><path d="M12.4 21.4 C17 20.6 22 14.4 24.2 9 C25.8 5 23.6 2.2 21.6 3.4 C18.4 5.4 16 16 15.2 24 C14.6 30.4 16.6 33 18.6 31.4 C22 28.6 23.4 21.6 24 18.4 C24.6 21 26 22 27.4 20.2 C28.4 18.8 29.2 18.6 29.8 20 C30.4 21.4 31.4 21.4 32.4 20 C33.6 18.4 35.4 16.8 40.2 16.2" stroke-width="1.5"/></svg>
<div style="position:absolute;left:1348.2px;top:87.5px;width:1.2px;height:17.0px;background:#d6dad7;"></div>
<div style="position:absolute;left:1361.8px;top:72.6px;width:65.6px;height:45.4px;background:#e0e4de;border-radius:9px;"></div>
<span class="t" style="left:1373.6px;top:90.0px;font-size:17.5px;color:#1d2622;letter-spacing:-0.669px;">Close</span>
<div style="position:absolute;left:1487.0px;top:66.5px;width:139.0px;height:59.0px;background:#e8ece9;border-radius:13px;box-shadow:0 0 0 1px rgba(255,255,255,.3),0 1px 6px rgba(60,80,70,.20),0 0 3px rgba(60,80,70,.14);"></div>
<svg style="position:absolute;left:1507.0px;top:81.0px;" width="28" height="30" viewBox="0 0 28 30" fill="none" stroke="#1d2622" stroke-width="1.7" stroke-linecap="round" stroke-linejoin="round"><path d="M7.4 2.4 H20.6 a5 5 0 0 1 5 5 V22.6 a5 5 0 0 1 -5 5 H7.4 a5 5 0 0 1 -5 -5 V7.4 a5 5 0 0 1 5 -5 Z"/><path d="M8.6 2.6 V4.6 a2.4 2.4 0 0 0 2.4 2.4 H17 a2.4 2.4 0 0 0 2.4 -2.4 V2.6"/><circle cx="14" cy="18" r="3.7"/></svg>
<svg style="position:absolute;left:1547.7px;top:90.5px" width="14.6" height="10.2" viewBox="-7.3 -5.1 14.6 10.2" fill="none" stroke="#1d2622" stroke-width="1.6" stroke-linecap="round" stroke-linejoin="round"><path d="M-4.3 -2.1 L0 2.1 L4.3 -2.1"/></svg>
<div style="position:absolute;left:1577.5px;top:77.5px;width:35.0px;height:35.0px;border-radius:50%;background:radial-gradient(circle at 55% 85%,#8be3ff 0%,#4aa8f5 40%,#4a7ff0 75%,#5c6df0 100%);box-shadow:0 0 4px rgba(120,190,255,.8);"></div>
<svg style="position:absolute;left:1580.0px;top:80.0px;" width="30" height="30" viewBox="0 0 30 30" fill="none" stroke="#e9f6ff" stroke-width="1.4" stroke-linecap="round" stroke-linejoin="round"><ellipse cx="15" cy="15" rx="10.4" ry="5.6" transform="rotate(-45 15 15)"/><ellipse cx="15" cy="15" rx="10.4" ry="5.6" transform="rotate(45 15 15)"/><path d="M15 11.6 L16 14 L18.4 15 L16 16 L15 18.4 L14 16 L11.6 15 L14 14 Z" fill="#fff" stroke="none"/></svg>
<div style="position:absolute;left:997.0px;top:1163.5px;width:629.0px;height:76.5px;background:#e8ece9;border-radius:13px;box-shadow:0 0 0 1px rgba(255,255,255,.3),0 1px 6px rgba(60,80,70,.20),0 0 3px rgba(60,80,70,.14);"></div>
<div style="position:absolute;left:1008.0px;top:1180.5px;width:24.0px;height:24.0px;background:#d5dcd7;border-radius:50%;"></div>
<svg style="position:absolute;left:1013.0px;top:1185.5px;" width="14" height="14" viewBox="0 0 14 14" fill="none" stroke="#1d2622" stroke-width="1.6" stroke-linecap="round" stroke-linejoin="round"><path d="M5.2 3 L9.2 7 L5.2 11"/></svg>
<svg style="position:absolute;left:1051.0px;top:1179.0px;" width="32" height="28" viewBox="0 0 32 28" fill="none" stroke="#1d2622" stroke-width="1.6" stroke-linecap="round" stroke-linejoin="round"><path d="M6.6 2.8 H12 C13.800 2.800 15.200 3.400 16 4.400 C16.800 3.400 18.200 2.800 20 2.800 H25.400 a4.200 4.200 0 0 1 4.200 4.200 V21.400 a4.200 4.200 0 0 1 -4.200 4.200 H6.600 a4.200 4.200 0 0 1 -4.200 -4.200 V7 a4.200 4.200 0 0 1 4.200 -4.200 Z"/><path d="M16 4.600 V25.400"/><path d="M7 9.400 H12 M7 14 H12 M7 18.600 H9.400 M20 9.400 H25 M20 14 H25 M20 18.600 H22.400" stroke-width="1.500"/></svg>
<svg style="position:absolute;left:1111.0px;top:1179.0px;" width="34" height="30" viewBox="0 0 34 30" fill="none" stroke="#1d2622" stroke-width="1.6" stroke-linecap="round" stroke-linejoin="round"><path d="M10.6 20.6 H7.6 a5 5 0 0 1 -5 -5 V7.6 a5 5 0 0 1 5 -5 H26.4 a5 5 0 0 1 5 5 V15.6 a5 5 0 0 1 -5 5 H23.4"/><path d="M17 20.4 L21 27 H13 Z"/></svg>
<div style="position:absolute;left:1164.0px;top:1184.0px;width:1.2px;height:18.0px;background:#d6dad7;"></div>
<div style="position:absolute;left:1177.5px;top:1169.5px;width:47.0px;height:47.0px;border:2px solid #46a570;border-radius:11px;background:#f1f5f2;box-sizing:border-box;"></div>
<span class="t" style="left:1193.7px;top:1181.0px;font-size:24px;color:#2a322e;">1</span>
<svg style="position:absolute;left:1250.8px;top:1184.9px" width="20.5" height="13.4" viewBox="-10.25 -6.7 20.5 13.4" fill="none" stroke="#adb3af" stroke-width="1.4" stroke-linecap="round" stroke-linejoin="round"><path d="M-7.25 3.7 L0 -3.7 L7.25 3.7"/></svg>
<svg style="position:absolute;left:1310.3px;top:1186.7px" width="20.5" height="13.4" viewBox="-10.25 -6.7 20.5 13.4" fill="none" stroke="#adb3af" stroke-width="1.4" stroke-linecap="round" stroke-linejoin="round"><path d="M-7.25 -3.7 L0 3.7 L7.25 -3.7"/></svg>
<div style="position:absolute;left:1357.0px;top:1184.0px;width:1.2px;height:18.0px;background:#d6dad7;"></div>
<div style="position:absolute;left:1372.5px;top:1174.0px;width:69.0px;height:37.5px;background:#f0f3f1;border-radius:9px;"></div>
<span class="t" style="left:1390.0px;top:1186.0px;font-size:17px;color:#1d2622;letter-spacing:-0.408px;">64%</span>
<svg style="position:absolute;left:1466.0px;top:1189.0px;" width="24" height="8" viewBox="0 0 24 8" fill="none" stroke="#1d2622" stroke-width="1.6" stroke-linecap="round" stroke-linejoin="round"><path d="M4.8 3.7 H20"/></svg>
<svg style="position:absolute;left:1526.0px;top:1181.0px;" width="24" height="24" viewBox="0 0 24 24" fill="none" stroke="#1d2622" stroke-width="1.6" stroke-linecap="round" stroke-linejoin="round"><path d="M12 4.2 V19.8 M4.2 12 H19.8"/></svg>
<svg style="position:absolute;left:1583.0px;top:1180.0px;" width="31" height="27" viewBox="0 0 31 27" fill="none" stroke="#1d2622" stroke-width="1.7" stroke-linecap="round" stroke-linejoin="round"><rect x="3.4" y="2.1" width="25" height="21.4" rx="4.4"/></svg>
<span class="t" style="left:1591.8px;top:1188.0px;font-size:11.5px;color:#1d2622;font-weight:700;letter-spacing:-0.674px;">1:1</span>
<div style="position:absolute;left:248.5px;top:163.5px;width:1124.0px;height:908.0px;background:#e8e8e9;border-radius:11px;box-shadow:0 0 0 1px rgba(190,200,195,.45),0 2px 10px rgba(40,50,60,.18);"></div>
<div style="position:absolute;left:251.5px;top:164.5px;width:1121.0px;height:902.0px;background:#e6eae7;border-radius:9px 11px 11px 9px;"></div>
<div style="position:absolute;left:631.0px;top:1066.5px;width:741.5px;height:5.0px;background:#e4d9f8;border-bottom-right-radius:11px;"></div>
<div style="position:absolute;left:248.5px;top:172.0px;width:3.0px;height:328.6px;background:linear-gradient(180deg,#dcd0f4 0,#dcd0f4 30%,#f0e6f4 40%,#e6eaf6 55%,#f2e4f0 70%,#dcd0f4 85%);"></div>
<div style="position:absolute;left:251.5px;top:164.5px;width:1121.0px;height:67.5px;background:linear-gradient(180deg,#e5eae7 0,#e5eae7 56px,rgba(229,234,231,0) 67.5px);border-radius:9px 11px 0 0;"></div>
<div style="position:absolute;left:808.0px;top:228.0px;width:14.0px;height:709.0px;background:linear-gradient(90deg,rgba(255,255,255,0),rgba(255,255,255,.16) 60%,rgba(255,255,255,0));"></div>
<span class="t" style="left:273.0px;top:188.0px;font-size:16.4px;color:#1d2622;letter-spacing:0.492px;">OCR Text Recognition</span>
<svg style="position:absolute;left:1331.0px;top:184.0px;" width="24" height="24" viewBox="0 0 24 24" fill="none" stroke="#1d2622" stroke-width="1.6" stroke-linecap="round" stroke-linejoin="round"><path d="M3.6 3.4 L19.8 19.8 M19.8 3.4 L3.6 19.8"/></svg>
<div style="position:absolute;left:286.0px;top:262.0px;width:488.0px;height:374.0px;background:#eff3f1;border:1.6px solid #46a570;border-radius:11px;box-sizing:border-box;"></div>
<div style="position:absolute;left:309.5px;top:286.5px;width:26.5px;height:26.5px;border:7.2px solid #46a570;border-radius:50%;background:#fff;box-sizing:border-box;"></div>
<span class="t" style="left:347.5px;top:293.0px;font-size:17px;color:#1d2622;font-weight:700;">Editable PDF (Dual-layer OCR)</span>
<span class="t" style="left:347.5px;top:329.0px;font-size:17px;color:#59625d;letter-spacing:0.192px;">Text over the page image</span>
<svg style="position:absolute;left:0;top:0;filter:drop-shadow(0 3px 5px rgba(0,0,0,.13))" width="1632" height="700" viewBox="0 0 1632 700" stroke="none"><rect x="451" y="387" width="158" height="198" fill="#dadcdc" stroke="#c2c5c5" stroke-width="1"/><path d="M451 387 L520 387 L470 470 L451 520 Z" fill="#e0e2e2" opacity=".6"/><path d="M609 430 L560 520 L609 585 Z" fill="#d2d4d4" opacity=".5"/><filter id="bl" x="-5%" y="-30%" width="110%" height="160%"><feGaussianBlur stdDeviation="0.8"/></filter><g filter="url(#bl)"><rect x="463.3" y="405.4" width="133" height="17" fill="#c6c8c8"/><rect x="465" y="442.8" width="58" height="6" fill="#c4c6c6"/><rect x="465" y="453.2" width="58" height="6" fill="#c4c6c6"/><rect x="465" y="463.8" width="40" height="6" fill="#c4c6c6"/><rect x="465" y="488.4" width="58" height="6" fill="#c4c6c6"/><rect x="465" y="499" width="58" height="6" fill="#c4c6c6"/><rect x="538.2" y="516.4" width="58.799999999999955" height="5.8" fill="#c4c6c6"/><rect x="538.2" y="527.2" width="58.799999999999955" height="5.8" fill="#c4c6c6"/><rect x="538.2" y="537.9" width="58.799999999999955" height="5.8" fill="#c4c6c6"/><rect x="538.2" y="548.7" width="44.299999999999955" height="5.8" fill="#c4c6c6"/></g><clipPath id="c1"><rect x="538.2" y="436.3" width="57.2" height="63.7" rx="3.5"/></clipPath><g clip-path="url(#c1)"><rect x="538" y="436" width="58" height="64" fill="#1152c4"/><path d="M538 436 H596 V450 L538 470 Z" fill="#0d49b4" opacity=".5"/><path d="M560 464.6 L596 455 V500 H560 Z" fill="#e7a94b"/><path d="M560 463.6 L596 454 V456 L560 465.600 Z" fill="#d8d3c8"/><path d="M549 486 L560 482 V500 H549 Z" fill="#cc5340"/><path d="M538 490 L549 486 V500 H538 Z" fill="#ec9584"/></g><defs><linearGradient id="tg" x1="0" y1="0" x2="0" y2="1"><stop offset="0" stop-color="#1d6d7c"/><stop offset="1" stop-color="#64a8ab"/></linearGradient></defs><rect x="465" y="516.4" width="59.7" height="49.1" rx="3.5" fill="url(#tg)"/><rect x="472.7" y="533.8" width="45.3" height="21.6" fill="#f1f1ee"/><rect x="472.700" y="555.3" width="45.3" height="10.2" fill="#111"/><rect x="475.6" y="536.2" width="4.6" height="4.200" fill="#161616"/><rect x="484.3" y="536.2" width="4.6" height="4.200" fill="#161616"/><rect x="493.0" y="536.2" width="4.6" height="4.200" fill="#161616"/><rect x="501.7" y="536.2" width="4.6" height="4.200" fill="#161616"/><rect x="510.4" y="536.2" width="4.6" height="4.200" fill="#161616"/><rect x="475.6" y="542.8" width="4.6" height="4.200" fill="#161616"/><rect x="484.3" y="542.8" width="4.6" height="4.200" fill="#161616"/><rect x="493.0" y="542.8" width="4.6" height="4.200" fill="#161616"/><rect x="501.7" y="542.8" width="4.6" height="4.200" fill="#161616"/><rect x="510.4" y="542.8" width="4.6" height="4.200" fill="#161616"/><rect x="475.6" y="549.4" width="4.6" height="4.200" fill="#161616"/><rect x="484.3" y="549.4" width="4.6" height="4.200" fill="#161616"/><rect x="493.0" y="549.4" width="4.6" height="4.200" fill="#161616"/><rect x="501.7" y="549.4" width="4.6" height="4.200" fill="#161616"/><rect x="510.4" y="549.4" width="4.6" height="4.200" fill="#161616"/><path d="M441 395 V381 a3 3 0 0 1 3 -3 H458 M602 378 H616 a3 3 0 0 1 3 3 V395 M619 575 V589.500 a3 3 0 0 1 -3 3 H602 M458 592.500 H444 a3 3 0 0 1 -3 -3 V575" stroke="#fff" stroke-width="2.2" fill="none" stroke-linecap="round"/></svg>
<div style="position:absolute;left:286.5px;top:666.5px;width:486.5px;height:105.5px;background:#f0f3f1;border-radius:11px;box-shadow:0 0 0 1px rgba(222,227,224,.9),0 1px 3px rgba(60,80,70,.08);"></div>
<div style="position:absolute;left:309.0px;top:689.0px;width:28.0px;height:28.0px;border:1.5px solid #9fa6a2;border-radius:50%;background:#cdd4cf;box-sizing:border-box;"></div>
<span class="t" style="left:347.5px;top:697.0px;font-size:17px;color:#1d2622;font-weight:700;letter-spacing:0.161px;">Text and Pictures Only</span>
<span class="t" style="left:347.5px;top:733.0px;font-size:17px;color:#59625d;letter-spacing:0.099px;">Text and images are on the same layer.</span>
<div style="position:absolute;left:286.5px;top:803.0px;width:486.5px;height:105.5px;background:#f0f3f1;border-radius:11px;box-shadow:0 0 0 1px rgba(222,227,224,.9),0 1px 3px rgba(60,80,70,.08);"></div>
<div style="position:absolute;left:309.0px;top:825.7px;width:28.0px;height:28.0px;border:1.5px solid #9fa6a2;border-radius:50%;background:#cdd4cf;box-sizing:border-box;"></div>
<span class="t" style="left:347.5px;top:833.0px;font-size:17px;color:#1d2622;font-weight:700;letter-spacing:-0.006px;">Searchable PDF Only (Dual-layer OCR)</span>
<span class="t" style="left:347.5px;top:869.0px;font-size:17px;color:#59625d;letter-spacing:0.248px;">Text under the page image</span>
<span class="t" style="left:848.0px;top:268.0px;font-size:17px;color:#1d2622;font-weight:700;letter-spacing:0.143px;">OCR Text Recognition</span>
<div style="position:absolute;left:848.0px;top:297.5px;width:487.0px;height:180.0px;border-radius:9px;background:linear-gradient(90deg,#bcdceb 0%,#c3d9ea 45%,#cdd2ee 100%);"></div>
<span class="t" style="left:896.0px;top:322.0px;font-size:17px;color:#1f2b2a;letter-spacing:0.288px;">This mode keeps the background image and</span>
<span class="t" style="left:896.0px;top:346.0px;font-size:17px;color:#1f2b2a;letter-spacing:0.398px;">illustrations of the source document and overlays the</span>
<span class="t" style="left:896.0px;top:370.0px;font-size:17px;color:#1f2b2a;letter-spacing:0.152px;">recognized text. Usually, such PDF files are larger</span>
<span class="t" style="left:896.0px;top:394.0px;font-size:17px;color:#1f2b2a;letter-spacing:0.345px;">than those created using the Text and pictures only</span>
<span class="t" style="left:896.0px;top:418.0px;font-size:17px;color:#1f2b2a;letter-spacing:0.439px;">mode. Visually, this document may differ slightly</span>
<span class="t" style="left:896.0px;top:442.0px;font-size:17px;color:#1f2b2a;letter-spacing:0.494px;">from the original.</span>
<svg style="position:absolute;left:866.0px;top:320.0px;" width="18" height="22" viewBox="0 0 18 22" fill="none" stroke="#1d2622" stroke-width="1" stroke-linecap="round" stroke-linejoin="round"><path d="M9 2.6 a5.4 5.4 0 0 1 3.2 9.8 V14.600 H5.8 V12.4 A5.4 5.4 0 0 1 9 2.6 Z" fill="#fbf3c4" stroke="#f3e6a0" stroke-width=".8"/><rect x="6.400" y="14.8" width="5.2" height="3.4" rx="1" fill="#9aa4a2" stroke="none"/></svg>
<div style="position:absolute;left:848.0px;top:503.5px;width:487.0px;height:1.0px;background:#e0e4e1;"></div>
<span class="t" style="left:848.0px;top:533.0px;font-size:17px;color:#1d2622;font-weight:700;letter-spacing:0.198px;">Document Language</span>
<span class="t" style="left:848.0px;top:569.0px;font-size:17px;color:#59625d;letter-spacing:0.300px;">Please correctly select the document's language type and</span>
<span class="t" style="left:848.0px;top:593.0px;font-size:17px;color:#59625d;letter-spacing:0.413px;">avoid selecting languages not present in the document</span>
<div style="position:absolute;left:849.0px;top:625.0px;width:425.5px;height:45.5px;background:#f0f3f1;border-radius:9px;box-shadow:0 0 0 1px rgba(222,227,224,.9),0 1px 3px rgba(60,80,70,.08);"></div>
<span class="t" style="left:864.0px;top:641.0px;font-size:17px;color:#1d2622;letter-spacing:0.175px;">Chinese Simplified and English</span>
<svg style="position:absolute;left:1242.3px;top:642.7px" width="15" height="10.6" viewBox="-7.5 -5.3 15 10.6" fill="none" stroke="#1d2622" stroke-width="1.7" stroke-linecap="round" stroke-linejoin="round"><path d="M-4.5 -2.3 L0 2.3 L4.5 -2.3"/></svg>
<svg style="position:absolute;left:1297.0px;top:631.0px;" width="30" height="32" viewBox="0 0 30 32" fill="none" stroke="#1d2622" stroke-width="1.4" stroke-linecap="round" stroke-linejoin="round"><path d="M4 5.4 H26.400 M4 16.200 H26.400 M4 27 H26.400" stroke-width="1.4"/><circle cx="9.4" cy="5.400" r="2.100" fill="#1d2622" stroke="none"/><circle cx="20.8" cy="16.200" r="2.100" fill="#1d2622" stroke="none"/><circle cx="9.400" cy="27" r="2.100" fill="#1d2622" stroke="none"/></svg>
<div style="position:absolute;left:848.0px;top:696.5px;width:487.0px;height:1.0px;background:#e0e4e1;"></div>
<span class="t" style="left:848.0px;top:739.0px;font-size:17px;color:#1d2622;font-weight:700;letter-spacing:-0.101px;">Page Range</span>
<svg style="position:absolute;left:1297.0px;top:729.0px;" width="33" height="33" viewBox="0 0 33 33" fill="none" stroke="#1d2622" stroke-width="1.5" stroke-linecap="round" stroke-linejoin="round"><path d="M12 27.8 H8 a4.6 4.6 0 0 1 -4.600 -4.600 V8 a4.6 4.6 0 0 1 4.600 -4.600 H19.600 a4.6 4.6 0 0 1 4.600 4.600 V14"/><path d="M8.6 10 H18.600 M8.6 15 H14.600"/><path d="M13.6 22.6 H28.600 M17.200 19 L13.600 22.600 L17.200 26.200 M25 19 L28.600 22.600 L25 26.200"/></svg>
<div style="position:absolute;left:849.0px;top:785.5px;width:193.0px;height:45.5px;background:#f0f3f1;border-radius:9px;box-shadow:0 0 0 1px rgba(222,227,224,.9),0 1px 3px rgba(60,80,70,.08);"></div>
<span class="t" style="left:865.5px;top:802.0px;font-size:17px;color:#2a322e;">1</span>
<svg style="position:absolute;left:1009.8px;top:795.4px" width="16" height="11.2" viewBox="-8.0 -5.6 16 11.2" fill="none" stroke="#747c78" stroke-width="1.4" stroke-linecap="round" stroke-linejoin="round"><path d="M-5.0 2.6 L0 -2.6 L5.0 2.6"/></svg>
<svg style="position:absolute;left:1009.8px;top:810.2px" width="16" height="11.2" viewBox="-8.0 -5.6 16 11.2" fill="none" stroke="#747c78" stroke-width="1.4" stroke-linecap="round" stroke-linejoin="round"><path d="M-5.0 -2.6 L0 2.6 L5.0 -2.6"/></svg>
<span class="t" style="left:1066.5px;top:801.0px;font-size:17px;color:#59625d;">-</span>
<div style="position:absolute;left:1097.6px;top:785.5px;width:191.8px;height:45.5px;background:#f0f3f1;border-radius:9px;box-shadow:0 0 0 1px rgba(222,227,224,.9),0 1px 3px rgba(60,80,70,.08);"></div>
<span class="t" style="left:1114.2px;top:802.0px;font-size:17px;color:#2a322e;">1</span>
<svg style="position:absolute;left:1257.0px;top:795.4px" width="16" height="11.2" viewBox="-8.0 -5.6 16 11.2" fill="none" stroke="#747c78" stroke-width="1.4" stroke-linecap="round" stroke-linejoin="round"><path d="M-5.0 2.6 L0 -2.6 L5.0 2.6"/></svg>
<svg style="position:absolute;left:1257.0px;top:810.2px" width="16" height="11.2" viewBox="-8.0 -5.6 16 11.2" fill="none" stroke="#747c78" stroke-width="1.4" stroke-linecap="round" stroke-linejoin="round"><path d="M-5.0 -2.6 L0 2.6 L5.0 -2.6"/></svg>
<span class="t" style="left:1308.5px;top:802.0px;font-size:17px;color:#626a66;letter-spacing:0.366px;">/ 1</span>
<div style="position:absolute;left:849.0px;top:848.0px;width:485.5px;height:46.0px;background:#f0f3f1;border-radius:9px;box-shadow:0 0 0 1px rgba(222,227,224,.9),0 1px 3px rgba(60,80,70,.08);"></div>
<span class="t" style="left:861.3px;top:865.0px;font-size:17px;color:#1d2622;letter-spacing:0.009px;">All Pages</span>
<svg style="position:absolute;left:1302.3px;top:865.7px" width="15" height="10.6" viewBox="-7.5 -5.3 15 10.6" fill="none" stroke="#1d2622" stroke-width="1.7" stroke-linecap="round" stroke-linejoin="round"><path d="M-4.5 -2.3 L0 2.3 L4.5 -2.3"/></svg>
<div style="position:absolute;left:1120.0px;top:986.8px;width:215.0px;height:47.4px;background:#dfe2dc;border-radius:10px;"></div>
<span class="t" style="left:1207.0px;top:1004.0px;font-size:17px;color:#1d2622;letter-spacing:-0.187px;">Cancel</span>
<div style="position:absolute;left:915.8px;top:986.8px;width:203.6px;height:47.4px;background:#48a671;border-radius:10px;"></div>
<span class="t" style="left:986.5px;top:1004.0px;font-size:17px;color:#d6f8e3;letter-spacing:0.253px;">Convert</span>
<div style="position:absolute;left:892.2px;top:950.0px;width:245.4px;height:106.0px;border:8px solid #3f45d0;box-sizing:border-box;border-radius:3.5px;"></div>
</body></html>
